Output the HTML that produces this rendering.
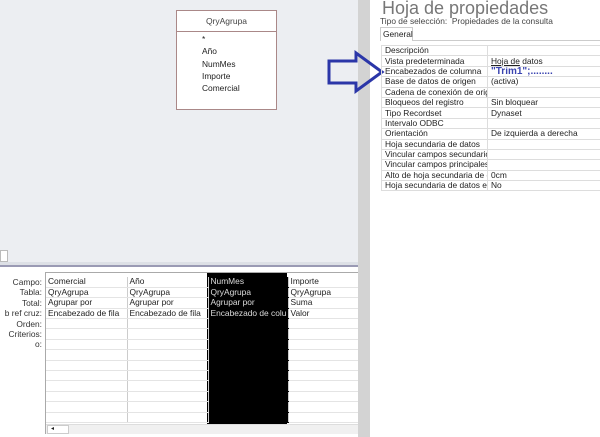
<!DOCTYPE html>
<html><head><style>
*{margin:0;padding:0;box-sizing:border-box}
body{width:600px;height:437px;overflow:hidden;position:relative;background:#fff;font-family:"Liberation Sans",sans-serif;font-size:8.5px;color:#222}
.abs{position:absolute}
table{border-collapse:collapse}
.pt td{height:10.4px;border:1px solid #ddd;padding:0 3px;white-space:nowrap;overflow:hidden;line-height:9px;font-size:8.4px}
.g td{height:10.4px;border-bottom:1px solid #e4e4e4;border-right:1px solid #ccc;padding:0 2px;white-space:nowrap;overflow:hidden;font-size:8.4px;line-height:9px}
.g td.k{background:#000;color:#ddd;border-bottom-color:#000}
.lab div{height:10.4px;line-height:10.4px;text-align:right;font-size:8.4px;white-space:nowrap;overflow:hidden}
</style></head><body>
<div class="abs" style="left:0;top:0;width:358px;height:262px;background:#eceef2"></div>
<div class="abs" style="left:0;top:250px;width:8px;height:12px;background:#fff;border:1px solid #bbb"></div>
<div class="abs" style="left:0;top:262px;width:358px;height:3px;background:#dde0e6"></div>
<div class="abs" style="left:0;top:265px;width:358px;height:2px;background:#9a9ab4"></div>
<div class="abs" style="left:358px;top:0;width:12px;height:437px;background:#d3d3d3"></div>
<div class="abs" style="left:176px;top:10px;width:101px;height:100px;background:#fff;border:1px solid #a88"></div>
<div class="abs" style="left:177px;top:11px;width:99px;height:21px;border-bottom:1px solid #a88;text-align:center;line-height:20px;color:#444">QryAgrupa</div>
<div class="abs" style="left:202px;top:33px;line-height:12.3px;font-size:8.4px">*<br>Año<br>NumMes<br>Importe<br>Comercial</div>
<svg class="abs" style="left:325px;top:50px" width="62" height="46"><polygon points="4,11 31,11 31,3 57,22 31,41 31,33 4,33" fill="none" stroke="#2b36a8" stroke-width="3"/></svg>
<div class="abs" style="left:382px;top:-2px;font-size:18px;line-height:20px;color:#777">Hoja de propiedades</div>
<div class="abs" style="left:380px;top:16px;font-size:8.4px;color:#444">Tipo de selección:&nbsp; Propiedades de la consulta</div>
<div class="abs" style="left:380px;top:40px;width:220px;height:1px;background:#ccc"></div>
<div class="abs" style="left:380px;top:27px;width:33px;height:14px;border:1px solid #ccc;border-bottom:none;background:#fff;line-height:12px;padding-left:2px;font-size:8.4px">General</div>
<table class="pt abs" style="left:381px;top:45px;width:225px;table-layout:fixed">
<colgroup><col style="width:106px"><col style="width:119px"></colgroup>
<tr><td>Descripción</td><td></td></tr>
<tr><td>Vista predeterminada</td><td><u>Hoja de</u> datos</td></tr>
<tr><td>Encabezados de columna</td><td style="color:#3a44b0;font-weight:bold;font-size:10px">"Trim1";........</td></tr>
<tr><td>Base de datos de origen</td><td>(activa)</td></tr>
<tr><td>Cadena de conexión de orig</td><td></td></tr>
<tr><td>Bloqueos del registro</td><td>Sin bloquear</td></tr>
<tr><td>Tipo Recordset</td><td>Dynaset</td></tr>
<tr><td>Intervalo ODBC</td><td></td></tr>
<tr><td>Orientación</td><td>De izquierda a derecha</td></tr>
<tr><td>Hoja secundaria de datos</td><td></td></tr>
<tr><td>Vincular campos secundarios</td><td></td></tr>
<tr><td>Vincular campos principales</td><td></td></tr>
<tr><td>Alto de hoja secundaria de c</td><td>0cm</td></tr>
<tr><td>Hoja secundaria de datos ex</td><td>No</td></tr>
</table>
<div class="abs lab" style="left:0;top:277px;width:42px;color:#333">
<div>Campo:</div><div>Tabla:</div><div>Total:</div><div style="margin-left:-10px">b ref cruz:</div><div>Orden:</div><div>Criterios:</div><div>o:</div></div>
<div class="abs" style="left:45px;top:272px;width:313px;height:162px;border:1px solid #aaa;border-right:none;overflow:hidden;background:#fff">
<div class="abs" style="left:161px;top:0;width:80px;height:152px;background:#000"></div>
<table class="g" style="position:relative;width:313px;table-layout:fixed;margin-top:4px">
<colgroup><col style="width:81px"><col style="width:81px"><col style="width:80px"><col style="width:71px"></colgroup>
<tr><td>Comercial</td><td>Año</td><td class="k">NumMes</td><td>Importe</td></tr>
<tr><td>QryAgrupa</td><td>QryAgrupa</td><td class="k">QryAgrupa</td><td>QryAgrupa</td></tr>
<tr><td>Agrupar por</td><td>Agrupar por</td><td class="k">Agrupar por</td><td>Suma</td></tr>
<tr><td>Encabezado de fila</td><td>Encabezado de fila</td><td class="k">Encabezado de colu</td><td>Valor</td></tr>
<tr><td></td><td></td><td class="k"></td><td></td></tr>
<tr><td></td><td></td><td class="k"></td><td></td></tr>
<tr><td></td><td></td><td class="k"></td><td></td></tr>
<tr><td></td><td></td><td class="k"></td><td></td></tr>
<tr><td></td><td></td><td class="k"></td><td></td></tr>
<tr><td></td><td></td><td class="k"></td><td></td></tr>
<tr><td></td><td></td><td class="k"></td><td></td></tr>
<tr><td></td><td></td><td class="k"></td><td></td></tr>
<tr><td></td><td></td><td class="k"></td><td></td></tr>
<tr><td></td><td></td><td class="k"></td><td></td></tr>
</table>
</div>
<div class="abs" style="left:46px;top:424px;width:312px;height:10px;background:#f0f0f0;border-top:1px solid #ddd"></div>
<div class="abs" style="left:47px;top:425px;width:22px;height:9px;background:#fff;border:1px solid #ccc;font-size:6px;line-height:7px;padding-left:3px">◂</div>
</body></html>
